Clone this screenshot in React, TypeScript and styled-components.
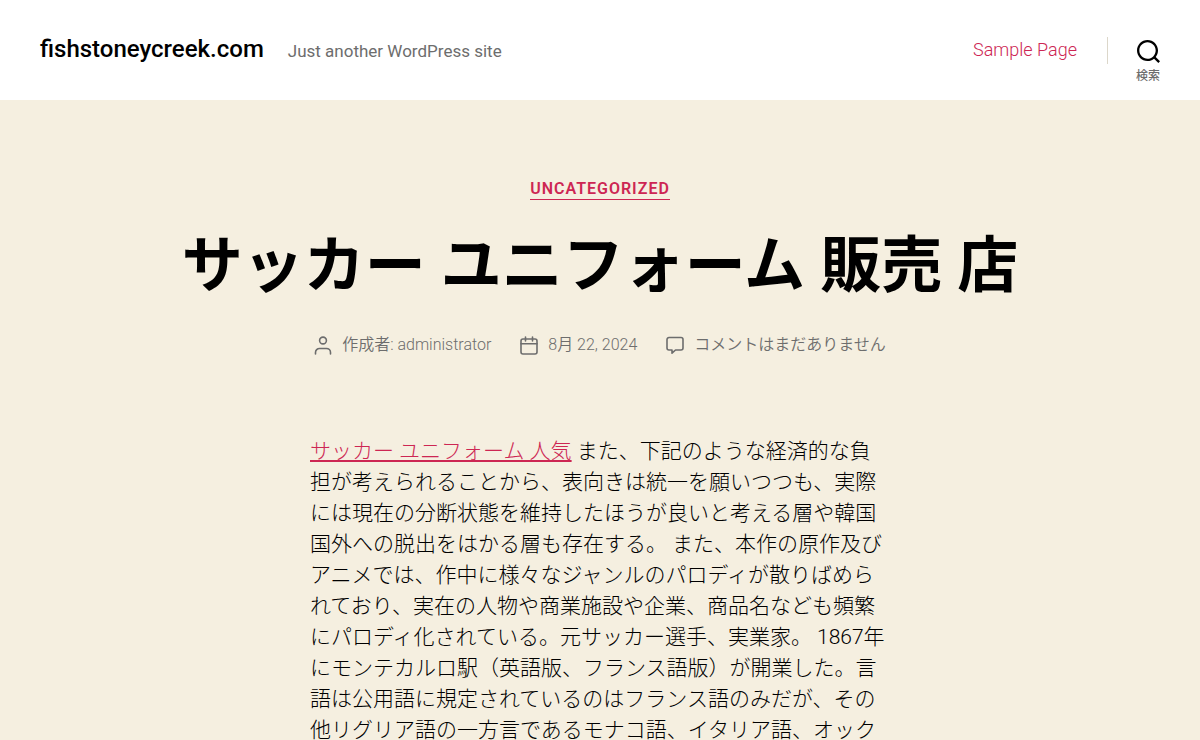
import React from "react";
import styled, { createGlobalStyle } from "styled-components";

const accent = "#cd2653";
const muted = "#6d6d6d";
const cream = "#f5efe0";

const GlobalStyle = createGlobalStyle`
  *, *::before, *::after { box-sizing: border-box; }
  body {
    margin: 0;
    background: ${cream};
    color: #000;
    font-family: Roboto, "Noto Sans CJK JP", sans-serif;
  }
`;

const Header = styled.header`
  display: flex;
  align-items: center;
  justify-content: space-between;
  height: 100px;
  padding: 0 40px;
  background: #fff;
`;

const Titles = styled.div`
  display: flex;
  align-items: baseline;
  gap: 24px;
  padding-bottom: 2px;
`;

const SiteTitle = styled.a`
  color: #000;
  font-size: 24px;
  font-weight: 500;
  line-height: 28px;
  text-decoration: none;
`;

const Tagline = styled.div`
  color: ${muted};
  font-size: 17px;
  font-weight: 400;
  line-height: 24px;
`;

const Navigation = styled.nav`
  display: flex;
  align-items: center;
`;

const NavLink = styled.a`
  color: ${accent};
  font-size: 18px;
  font-weight: 350;
  line-height: 24px;
  text-decoration: none;
`;

const SearchArea = styled.div`
  display: flex;
  align-items: center;
  height: 27px;
  margin-left: 30px;
  padding-left: 28px;
  border-left: 1px solid #dcd7ca;
`;

const SearchButton = styled.button`
  display: flex;
  flex-direction: column;
  align-items: flex-end;
  gap: 6px;
  padding: 23px 0 0;
  border: 0;
  background: none;
  color: ${muted};
  font-family: inherit;
  font-size: 12px;
  font-weight: 500;
  line-height: 14px;
  cursor: pointer;
`;

const EntryHeader = styled.header`
  display: flex;
  flex-direction: column;
  align-items: center;
  padding: 79px 40px 0;
  text-align: center;
`;

const Category = styled.a`
  border-bottom: 1px solid ${accent};
  color: ${accent};
  font-size: 16px;
  font-weight: 600;
  letter-spacing: 1px;
  line-height: 20px;
  text-decoration: none;
  text-transform: uppercase;
`;

const EntryTitle = styled.h1`
  margin: 30px 0 0;
  font-size: 61px;
  font-weight: 700;
  line-height: 72px;
`;

const MetaList = styled.ul`
  display: flex;
  flex-wrap: wrap;
  justify-content: center;
  gap: 10px 29px;
  margin: 31px 0 0;
  padding: 0;
  list-style: none;
`;

const MetaItem = styled.li`
  display: flex;
  align-items: center;
  gap: 10px;
  color: ${muted};
  font-size: 16px;
  font-weight: 350;
  line-height: 24px;
`;

const MetaLink = styled.a`
  color: inherit;
  text-decoration: none;
`;

const EntryContent = styled.div`
  max-width: 580px;
  margin: 0 auto;
  padding: 79px 0 80px;
  font-size: 21px;
  font-weight: 300;
  line-height: 31px;

  p { margin: 0; }
  a { color: ${accent}; text-decoration: underline; }
`;

const SearchIcon = () => (
  <svg width="23" height="23" viewBox="0 0 23 23" aria-hidden="true">
    <path
      fill="#000"
      transform="translate(-20 -31)"
      d="M38.710696,48.0601792 L43,52.3494831 L41.3494831,54 L37.0601792,49.710696 C35.2632422,51.1481185 32.9839107,52.0076499 30.5038249,52.0076499 C24.7027226,52.0076499 20,47.3049272 20,41.5038249 C20,35.7027226 24.7027226,31 30.5038249,31 C36.3049272,31 41.0076499,35.7027226 41.0076499,41.5038249 C41.0076499,43.9839107 40.1481185,46.2632422 38.710696,48.0601792 Z M36.3875844,47.1716785 C37.8030221,45.7026647 38.6734666,43.7048964 38.6734666,41.5038249 C38.6734666,36.9918565 35.0157934,33.3341833 30.5038249,33.3341833 C25.9918565,33.3341833 22.3341833,36.9918565 22.3341833,41.5038249 C22.3341833,46.0157934 25.9918565,49.6734666 30.5038249,49.6734666 C32.7048964,49.6734666 34.7026647,48.8030221 36.1716785,47.3875844 Z"
    />
  </svg>
);

const MetaIcon = ({ children }: { children: React.ReactNode }) => (
  <svg
    width="18"
    height="19"
    viewBox="0 0 18 19"
    fill="none"
    stroke="currentColor"
    strokeWidth="1.6"
    strokeLinecap="round"
    strokeLinejoin="round"
    aria-hidden="true"
  >
    {children}
  </svg>
);

export default function App() {
  return (
    <>
      <GlobalStyle />
      <Header>
        <Titles>
          <SiteTitle href="#">fishstoneycreek.com</SiteTitle>
          <Tagline>Just another WordPress site</Tagline>
        </Titles>
        <Navigation>
          <NavLink href="#">Sample Page</NavLink>
          <SearchArea>
            <SearchButton type="button">
              <SearchIcon />
              検索
            </SearchButton>
          </SearchArea>
        </Navigation>
      </Header>
      <main>
        <article>
          <EntryHeader>
            <Category href="#">Uncategorized</Category>
            <EntryTitle>サッカー ユニフォーム 販売 店</EntryTitle>
            <MetaList>
              <MetaItem>
                <MetaIcon>
                  <circle cx="9" cy="4.5" r="3.4" />
                  <path d="M1.500 18v-1.500a4 4 0 0 1 4-4h7a4 4 0 0 1 4 4V18" />
                </MetaIcon>
                <span>
                  作成者: <MetaLink href="#">administrator</MetaLink>
                </span>
              </MetaItem>
              <MetaItem>
                <MetaIcon>
                  <rect x="1" y="3" width="16" height="15" rx="2" />
                  <path d="M5.5 1v4M12.5 1v4M1 7.800h16" />
                </MetaIcon>
                <MetaLink href="#">8月 22, 2024</MetaLink>
              </MetaItem>
              <MetaItem>
                <MetaIcon>
                  <path d="M3 1.500h12a2 2 0 0 1 2 2v8.500a2 2 0 0 1-2 2H9.500L6 17.200V14H3a2 2 0 0 1-2-2V3.500a2 2 0 0 1 2-2z" />
                </MetaIcon>
                <MetaLink href="#">コメントはまだありません</MetaLink>
              </MetaItem>
            </MetaList>
          </EntryHeader>
          <EntryContent>
            <p>
              <a href="#">サッカー ユニフォーム 人気</a>{" "}
              また、下記のような経済的な負担が考えられることから、表向きは統一を願いつつも、実際には現在の分断状態を維持したほうが良いと考える層や韓国国外への脱出をはかる層も存在する。
              また、本作の原作及びアニメでは、作中に様々なジャンルのパロディが散りばめられており、実在の人物や商業施設や企業、商品名なども頻繁にパロディ化されている。元サッカー選手、実業家。
              1867年にモンテカルロ駅（英語版、フランス語版）が開業した。言語は公用語に規定されているのはフランス語のみだが、その他リグリア語の一方言であるモナコ語、イタリア語、オック
            </p>
          </EntryContent>
        </article>
      </main>
    </>
  );
}
